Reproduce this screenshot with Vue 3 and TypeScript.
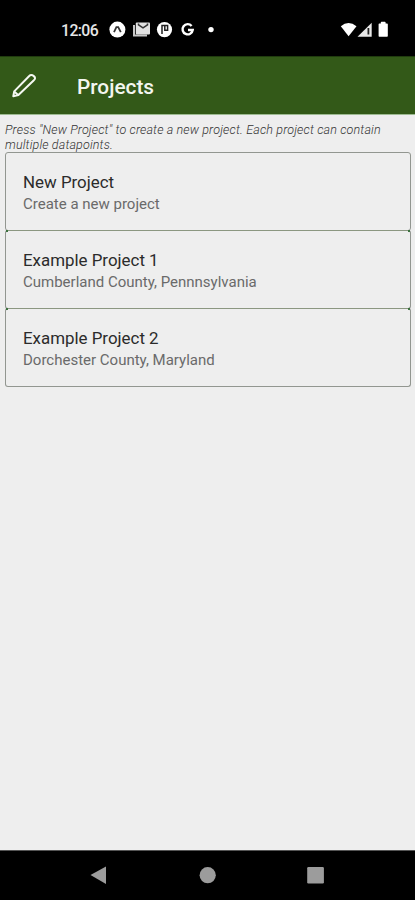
<script setup lang="ts">
interface Project {
  title: string
  subtitle: string
}

const projects: Project[] = [
  { title: 'New Project', subtitle: 'Create a new project' },
  { title: 'Example Project 1', subtitle: 'Cumberland County, Pennnsylvania' },
  { title: 'Example Project 2', subtitle: 'Dorchester County, Maryland' },
]
</script>

<template>
  <div class="screen">
    <div class="status">
      <span class="clock">12:06</span>
      <svg class="notices" width="110" height="20" viewBox="0 0 110 20">
        <circle cx="8.4" cy="9.6" r="8" fill="#fff" />
        <path d="M5 12.2 7.4 7.2h1.8l2.6 5" fill="none" stroke="#333" stroke-width="1.8" />
        <path d="M25 5v10.6h13" fill="none" stroke="#c8c8c8" stroke-width="2" />
        <rect x="26.8" y="2.6" width="14.2" height="12" rx="1" fill="#e2e2e2" />
        <path d="M29.5 3.6v1.2L34 7.8l4.5-3V3.6" fill="none" stroke="#333" stroke-width="1.5" />
        <circle cx="55.5" cy="9.6" r="7.6" fill="#fff" />
        <path d="M53 14V5.4h5.6v4.8h-2.8V6" fill="none" stroke="#222" stroke-width="1.5" />
        <path d="M82.6 6A5.1 5.1 0 1 0 83.7 10H79" fill="none" stroke="#fff" stroke-width="2.4" />
        <circle cx="102" cy="9.6" r="2.7" fill="#fff" />
      </svg>
      <svg class="signals" width="50" height="18" viewBox="0 0 50 18">
        <path d="M.8 5.2Q8.5-1 16.5 5.2L8.6 15.2z" fill="#fff" />
        <path d="M17.5 15.8 31.7 1.8v14z" fill="#e8e8e8" />
        <path d="M28.4 7v6.5" stroke="#222" stroke-width="1.8" />
        <path d="M39.3 3.3h2.2V1.5h3.4v1.8h2.2v11.8h-7.8z" fill="#fff" stroke="#fff" stroke-width="1.4" stroke-linejoin="round" />
      </svg>
    </div>

    <header class="toolbar">
      <svg class="pencil" width="26" height="26" viewBox="0 0 26 26">
        <path d="M2.3 23.2 3.2 18.4 18 3.2Q20.2 1 22.8 3.1T22.6 7.5L7.4 22zM3.2 18.6l4 3.4" fill="none" stroke="#f5f8f2" stroke-width="2" stroke-linejoin="round" />
      </svg>
      <h1>Projects</h1>
    </header>

    <main>
      <p class="hint">Press "New Project" to create a new project. Each project can contain<br />multiple datapoints.</p>
      <div class="list">
        <section v-for="project in projects" :key="project.title" class="card">
          <div class="title">{{ project.title }}</div>
          <div class="subtitle">{{ project.subtitle }}</div>
        </section>
      </div>
    </main>

    <nav>
      <svg width="415" height="49" viewBox="0 0 415 49">
        <path d="M90.5 24 106 15.5v17.5z" fill="#9c9c9c" />
        <circle cx="207.7" cy="24.2" r="8.1" fill="#9c9c9c" />
        <rect x="307.2" y="16" width="16.7" height="16.5" rx="1.2" fill="#9c9c9c" />
      </svg>
    </nav>
  </div>
</template>

<style>
body {
  margin: 0;
  background: #eee;
}
</style>

<style scoped>
.screen {
  display: flex;
  flex-direction: column;
  width: 415px;
  height: 900px;
  overflow: hidden;
  background: #eee;
  font-family: Roboto, sans-serif;
}
svg {
  display: block;
  flex: none;
}
.status {
  display: flex;
  flex: none;
  height: 56px;
  box-sizing: border-box;
  padding: 20px 25px 0 61px;
  background: #000;
  color: #e6e6e6;
}
.clock {
  width: 48px;
  font-size: 15.8px;
  line-height: 21px;
  font-weight: 500;
  letter-spacing: -0.6px;
}
.signals {
  margin-left: auto;
  margin-top: 1px;
}
.toolbar {
  display: flex;
  flex: none;
  align-items: center;
  height: 59px;
  box-sizing: border-box;
  padding: 1px 0 0 11px;
  background: #335918;
  border-top: 1px solid #203c0e;
  border-bottom: 1px solid #9ebb92;
}
h1 {
  margin: 2px 0 0 40px;
  color: #f3f6f0;
  font-size: 20.8px;
  line-height: 24px;
  font-weight: 500;
}
main {
  flex: 1;
  padding: 7px 4px 0 5px;
}
.hint {
  margin: 0;
  color: #333;
  font-size: 12.5px;
  line-height: 15px;
  font-style: italic;
  font-weight: 300;
  letter-spacing: 0.15px;
  white-space: nowrap;
}
.list {
  display: flex;
  flex-direction: column;
}
.card {
  position: relative;
  height: 79px;
  box-sizing: border-box;
  padding: 18px 17px 0;
  border: 1px solid #929690;
  border-radius: 3px;
}
.card + .card {
  margin-top: -1px;
  border-top-color: #8b9781;
}
.card + .card::before,
.card + .card::after {
  content: '';
  position: absolute;
  top: -1px;
  width: 2px;
  height: 2px;
  background: #3d7240;
}
.card + .card::before {
  left: 0;
}
.card + .card::after {
  right: 0;
}
.title {
  color: #2b2b2b;
  font-size: 16.9px;
  line-height: 22px;
}
.subtitle {
  color: #6a6a6a;
  font-size: 15px;
  line-height: 22px;
}
nav {
  flex: none;
  height: 49px;
  border-top: 1px solid #555;
  background: #000;
}
</style>
